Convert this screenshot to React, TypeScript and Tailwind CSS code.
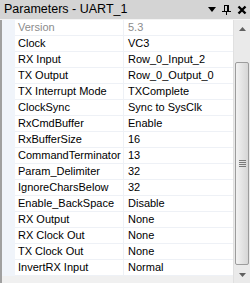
/* ── Data ─────────────────────────────────────────── */

type Param = { name: string; value: string; disabled?: boolean };

const PARAMS: Param[] = [
  { name: 'Version', value: '5.3', disabled: true },
  { name: 'Clock', value: 'VC3' },
  { name: 'RX Input', value: 'Row_0_Input_2' },
  { name: 'TX Output', value: 'Row_0_Output_0' },
  { name: 'TX Interrupt Mode', value: 'TXComplete' },
  { name: 'ClockSync', value: 'Sync to SysClk' },
  { name: 'RxCmdBuffer', value: 'Enable' },
  { name: 'RxBufferSize', value: '16' },
  { name: 'CommandTerminator', value: '13' },
  { name: 'Param_Delimiter', value: '32' },
  { name: 'IgnoreCharsBelow', value: '32' },
  { name: 'Enable_BackSpace', value: 'Disable' },
  { name: 'RX Output', value: 'None' },
  { name: 'RX Clock Out', value: 'None' },
  { name: 'TX Clock Out', value: 'None' },
  { name: 'InvertRX Input', value: 'Normal' },
];

/* ── Icons ─────────────────────────────────────────── */

function PinIcon() {
  return (
    <svg width="9" height="10" viewBox="0 0 9 10" shapeRendering="crispEdges">
      <rect x="2" y="0" width="5" height="1" fill="#000" />
      <rect x="2" y="1" width="1" height="5" fill="#000" />
      <rect x="5" y="1" width="2" height="5" fill="#000" />
      <rect x="0" y="6" width="9" height="1" fill="#000" />
      <rect x="4" y="7" width="1" height="3" fill="#000" />
    </svg>
  );
}

function CloseIcon() {
  return (
    <svg width="10" height="10" viewBox="0 0 10 10">
      <path d="M1.5 1.5 L8.5 8.5 M8.5 1.5 L1.5 8.5" stroke="#000" strokeWidth="2.4" />
    </svg>
  );
}

function Arrow({ up }: { up?: boolean }) {
  return (
    <svg width="7" height="4" viewBox="0 0 7 4">
      <path d={up ? 'M0 4 L3.5 0 L7 4 Z' : 'M0 0 L7 0 L3.5 4 Z'} fill="#606060" />
    </svg>
  );
}

/* ── Component ─────────────────────────────────────────── */

export default function App() {
  return (
    <div
      className="w-[250px] h-[283px] flex flex-col bg-[#f0f0f0] overflow-hidden"
      style={{ fontFamily: '"Liberation Sans", Arial, sans-serif' }}
    >
      {/* Header */}
      <div className="h-[20px] shrink-0 flex items-center justify-between pl-[4px] pr-[3px] bg-[#d4d4d4] border-b border-[#f4f4f4]">
        <span className="text-[12.5px] leading-none text-black">Parameters - UART_1</span>
        <div className="flex items-center gap-[6px]">
          <svg width="8" height="5" viewBox="0 0 8 5">
            <path d="M0 0 L8 0 L4 5 Z" fill="#000" />
          </svg>
          <PinIcon />
          <CloseIcon />
        </div>
      </div>

      {/* Body */}
      <div className="flex-1 flex min-h-0 border-l-2 border-[#a0a0a0]">
        <div className="flex-1 flex flex-col min-w-0">
          {PARAMS.map((p) => (
            <div key={p.name} className="h-[16px] flex text-[11px] leading-[15px]">
              <div className="w-[13px] shrink-0 bg-[#f0f4fa]" />
              <div
                className={`w-[109px] shrink-0 pl-[3px] bg-white border-b border-r border-[#eef1f6] truncate ${
                  p.disabled ? 'text-[#8c8c8c]' : 'text-black'
                }`}
              >
                {p.name}
              </div>
              <div
                className={`flex-1 pl-[4px] bg-white border-b border-[#eef1f6] truncate ${
                  p.disabled ? 'text-[#8c8c8c]' : 'text-black'
                }`}
              >
                {p.value}
              </div>
            </div>
          ))}
        </div>

        {/* Scrollbar */}
        <div className="w-[17px] shrink-0 flex flex-col bg-[#eaeaea] border-l border-[#e0e0e0]">
          <div className="h-[17px] flex items-center justify-center">
            <Arrow up />
          </div>
          <div className="flex-1 pt-[25px] pb-[1px] px-[1px] flex flex-col">
            <div className="flex-1 rounded-[2px] border border-[#9c9c9c] bg-gradient-to-r from-[#f2f2f2] via-[#e4e4e4] to-[#d6d6d6] flex items-center justify-center">
              <div className="flex flex-col gap-[1px]">
                <div className="w-[7px] h-[1px] bg-[#7a7a7a]" />
                <div className="w-[7px] h-[1px] bg-[#7a7a7a]" />
                <div className="w-[7px] h-[1px] bg-[#7a7a7a]" />
                <div className="w-[7px] h-[1px] bg-[#7a7a7a]" />
              </div>
            </div>
          </div>
          <div className="h-[17px] flex items-center justify-center">
            <Arrow />
          </div>
        </div>
      </div>
    </div>
  );
}
